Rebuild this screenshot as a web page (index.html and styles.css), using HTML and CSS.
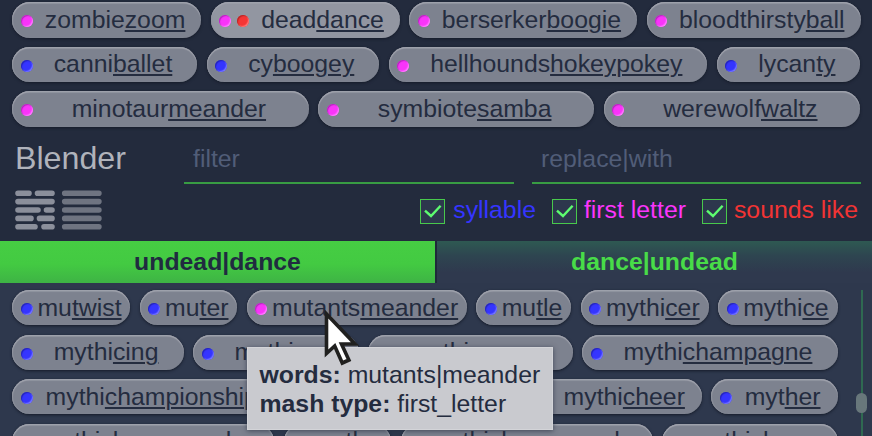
FILE: index.html
```html
<!DOCTYPE html>
<html lang="en">
<head>
<meta charset="utf-8">
<title>Blender</title>
<link rel="stylesheet" href="styles.css">
</head>
<body>
<main class="app">
  <section class="favorites">
    <div class="row">
      <div class="pill"><i class="dot pink"></i><span class="word">zombie<u>zoom</u></span></div>
      <div class="pill active"><i class="dot pink"></i><i class="dot red"></i><span class="word">dead<u>dance</u></span></div>
      <div class="pill"><i class="dot pink"></i><span class="word">berserker<u>boogie</u></span></div>
      <div class="pill"><i class="dot pink"></i><span class="word">bloodthirsty<u>ball</u></span></div>
    </div>
    <div class="row">
      <div class="pill"><i class="dot blue"></i><span class="word">canni<u>ballet</u></span></div>
      <div class="pill"><i class="dot blue"></i><span class="word">cy<u>boogey</u></span></div>
      <div class="pill"><i class="dot pink"></i><span class="word">hellhounds<u>hokeypokey</u></span></div>
      <div class="pill"><i class="dot blue"></i><span class="word">lycan<u>ty</u></span></div>
    </div>
    <div class="row">
      <div class="pill"><i class="dot pink"></i><span class="word">minotaur<u>meander</u></span></div>
      <div class="pill"><i class="dot pink"></i><span class="word">symbiote<u>samba</u></span></div>
      <div class="pill"><i class="dot pink"></i><span class="word">werewolf<u>waltz</u></span></div>
    </div>
  </section>

  <section class="toolbar">
    <div class="fields">
      <h1>Blender</h1>
      <div class="field">filter</div>
      <div class="field">replace|with</div>
    </div>
    <div class="options">
      <svg class="layouts" width="88" height="40" viewBox="0 0 88 40" stroke-width="5.6" stroke-linecap="round">
        <path stroke="#8b8f9b" d="M3 3.2h11M22.5 3.2H37M3 11.6h34M3 20h20M31.5 20H37M3 28.4h13M24.5 28.4H37M3 36.8h17M29 36.8h8"/>
        <path stroke="#6f7481" d="M49.7 3.2h34.2M49.7 11.6h34.2M49.7 20h34.2M49.7 28.4h34.2M49.7 36.8h34.2"/>
      </svg>
      <div class="checks">
        <label class="check syllable"><svg class="box" viewBox="0 0 23 23"><path d="M4 10.6l6 5.4 9.6-10.2"/></svg>syllable</label>
        <label class="check first"><svg class="box" viewBox="0 0 23 23"><path d="M4 10.6l6 5.4 9.6-10.2"/></svg>first letter</label>
        <label class="check sounds"><svg class="box" viewBox="0 0 23 23"><path d="M4 10.6l6 5.4 9.6-10.2"/></svg>sounds like</label>
      </div>
    </div>
  </section>

  <nav class="tabs">
    <div class="tab selected">undead|dance</div>
    <div class="tab">dance|undead</div>
  </nav>

  <section class="results">
    <div class="list">
      <div class="row">
        <div class="pill"><i class="dot blue"></i><span class="word">mu<u>twist</u></span></div>
        <div class="pill"><i class="dot blue"></i><span class="word">mu<u>ter</u></span></div>
        <div class="pill"><i class="dot pink"></i><span class="word">mutants<u>meander</u></span></div>
        <div class="pill"><i class="dot blue"></i><span class="word">mu<u>tle</u></span></div>
        <div class="pill"><i class="dot blue"></i><span class="word">mythi<u>cer</u></span></div>
        <div class="pill"><i class="dot blue"></i><span class="word">mythi<u>ce</u></span></div>
      </div>
      <div class="row">
        <div class="pill"><i class="dot blue"></i><span class="word">mythi<u>cing</u></span></div>
        <div class="pill"><i class="dot blue"></i><span class="word">mythi<u>con</u></span></div>
        <div class="pill"><i class="dot blue"></i><span class="word">mythi<u>census</u></span></div>
        <div class="pill"><i class="dot blue"></i><span class="word">mythi<u>champagne</u></span></div>
      </div>
      <div class="row">
        <div class="pill"><i class="dot blue"></i><span class="word">mythi<u>championship</u></span></div>
        <div class="pill"><i class="dot blue"></i><span class="word">mythi<u>chandeliers</u></span></div>
        <div class="pill"><i class="dot blue"></i><span class="word">mythi<u>cheer</u></span></div>
        <div class="pill"><i class="dot blue"></i><span class="word">myt<u>her</u></span></div>
      </div>
      <div class="row">
        <div class="pill"><i class="dot blue"></i><span class="word">mythi<u>choreographer</u></span></div>
        <div class="pill"><i class="dot blue"></i><span class="word">myt<u>hs</u></span></div>
        <div class="pill"><i class="dot blue"></i><span class="word">mythi<u>choreography</u></span></div>
        <div class="pill"><i class="dot blue"></i><span class="word">mythi<u>chorus</u></span></div>
      </div>
    </div>
    <div class="scroll"><div class="thumb"></div></div>
  </section>

  <div class="tooltip">
    <div><b>words:</b> mutants|meander</div>
    <div><b>mash type:</b> first_letter</div>
  </div>
  <svg class="cursor" width="38" height="58" viewBox="0 0 38 58"><path d="M3.5 5v39.5l8.2-7.5 7.6 17 6.6-3-7.4-16H32z" fill="#fff" stroke="#20201f" stroke-width="3.6"/></svg>
</main>
</body>
</html>
```

FILE: styles.css
```css
* { box-sizing: border-box; }

body {
  margin: 0;
  background: #232b3d;
  color: #242c3f;
  font: 24.8px/28px "Liberation Sans", Arial, sans-serif;
  overflow: hidden;
}

.app {
  position: relative;
  width: 872px;
  height: 436px;
  overflow: hidden;
  display: flex;
  flex-direction: column;
}

.favorites {
  height: 134px;
  padding: 2.4px 11.5px 0 12.3px;
  flex: none;
}

.row {
  display: flex;
  gap: 9.4px;
  height: 35.2px;
  margin-bottom: 9.3px;
}

.pill {
  flex: 1 0 auto;
  display: flex;
  align-items: center;
  padding: 0 8.2px 0 8.6px;
  border-radius: 18px;
  background: #7d828f;
  box-shadow: inset 0 1.5px 1px #a0a3ad, inset 1px 0 1px #8e929d, 0 1px 3px #151b29;
  white-space: nowrap;
}

.pill.active { background: #9296a1; }

.dot {
  width: 12px;
  height: 12px;
  margin: 3px 0 0;
  border-radius: 50%;
  flex: none;
}

.dot + .dot { margin-left: 5.8px; }
.pink { background: #f934f9; box-shadow: inset 1px 1px 1px #b326bb, inset -1px -1px 1px #ff7dff; }
.blue { background: #3535ff; box-shadow: inset 1px 1px 1px #2525b5, inset -1px -1px 1px #7777ff; }
.red { background: #f53535; box-shadow: inset 1px 1px 1px #b52626, inset -1px -1px 1px #ff7777; }

.word {
  flex: 1 0 auto;
  margin-left: 4px;
  text-align: center;
}

.word u {
  text-decoration-thickness: 1.7px;
  text-underline-offset: 2px;
}

.toolbar {
  height: 107px;
  padding: 0 11px 0 15px;
  flex: none;
}

.fields {
  display: grid;
  grid-template-columns: 151px 330px 329px;
  column-gap: 18px;
  height: 50px;
}

h1 {
  margin: 6px 0 0;
  font-size: 32.2px;
  line-height: 36px;
  font-weight: 400;
  color: #b0b3bb;
}

.field {
  padding: 11px 9px 0;
  border-bottom: 2px solid #389c43;
  color: #515d78;
}

.options {
  display: flex;
  justify-content: space-between;
  padding-top: 6px;
}

.layouts { fill: none; }

.checks {
  display: flex;
  gap: 16px;
  padding: 6px 3px 0 0;
}

.check {
  display: flex;
  gap: 8px;
  white-space: nowrap;
  line-height: 28px;
  height: 28px;
}

.box {
  width: 25px;
  height: 25px;
  margin-top: 3px;
  border: 1px solid #48c94c;
  background: #2d374d;
  fill: none;
  stroke: #5dfb70;
  stroke-width: 2.4;
}

.syllable { color: #3535ff; }
.first { color: #fb35fb; gap: 7px; }
.sounds { color: #f23434; gap: 7px; }

.tabs {
  display: grid;
  grid-template-columns: 1fr 1fr;
  column-gap: 2px;
  height: 42px;
  flex: none;
  background: #1f293a;
}

.tab {
  padding-top: 7px;
  text-align: center;
  font-weight: 700;
  color: #48dc48;
  background: linear-gradient(#2e5952, #2e4550 35%, #2f394e 75%);
}

.tab.selected {
  color: #202b40;
  background: linear-gradient(#46cd43, #43ca42 55%, #3eb345);
}

.results {
  flex: 1;
  display: flex;
  gap: 18.5px;
  padding: 7.3px 5px 0 12.2px;
  background: #2e384d;
}

.list { width: 825.6px; }

.scroll {
  width: 11px;
  background: linear-gradient(#2f6951, #2f6951) center / 2px 100% no-repeat;
}

.thumb {
  width: 11px;
  height: 20px;
  margin-top: 103px;
  border-radius: 6px;
  background: #68777b;
}

.tooltip {
  position: absolute;
  left: 247px;
  top: 347px;
  width: 306px;
  height: 83px;
  padding: 12px 11.5px;
  background: #c9cacf;
  border: 1px solid #d3d4d8;
  line-height: 29px;
  white-space: nowrap;
  box-shadow: 0 1px 5px #252d3fb0;
}

.cursor {
  position: absolute;
  left: 323px;
  top: 309px;
}
```
